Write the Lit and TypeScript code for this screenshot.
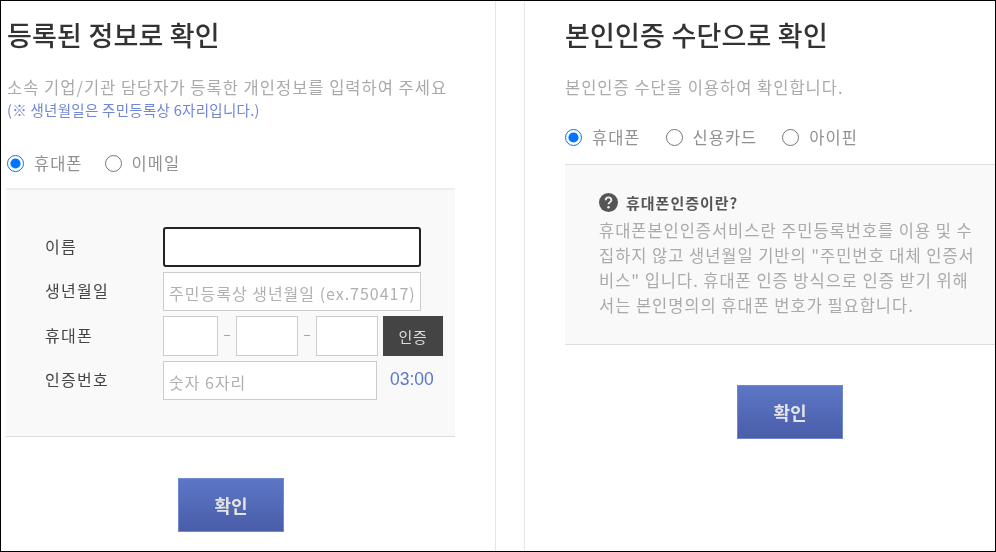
import { LitElement, html, css } from "lit";
import { customElement } from "lit/decorators.js";

@customElement("app-root")
export class AppRoot extends LitElement {
  static styles = css`
    :host {
      display: block;
      width: 996px;
      height: 552px;
      box-sizing: border-box;
      border: 1px solid #000;
      background: #fff;
      overflow: hidden;
      font-family: "Noto Sans CJK KR", "Liberation Sans", sans-serif;
      color: #888;
    }
    .page {
      display: grid;
      grid-template-columns: 495px 1fr;
      height: 100%;
      filter: blur(0.5px);
    }
    .left {
      border-right: 1px solid #e4e4e4;
      padding: 0 40px 0 5px;
      box-sizing: border-box;
    }
    .left > h2,
    .left > .desc,
    .left > .note,
    .left > .radios { margin-left: 1px; }
    .right {
      margin-left: 28px;
      border-left: 1px solid #e4e4e4;
      padding-left: 40px;
    }
    h2 {
      margin: 0;
      height: 68px;
      font-size: 27px;
      line-height: 68px;
      font-weight: 500;
      color: #333;
      letter-spacing: 0.2px;
    }
    .desc {
      margin: 5px 0 0;
      height: 25px;
      font-size: 16.5px;
      line-height: 26px;
      color: #aaa;
      letter-spacing: 1px;
      white-space: nowrap;
    }
    .note {
      margin: 0;
      height: 22px;
      font-size: 14.5px;
      line-height: 22px;
      color: #6f86d6;
      letter-spacing: 0.28px;
      white-space: nowrap;
    }
    .radios {
      display: flex;
      align-items: center;
      gap: 22px;
      height: 24px;
      font-size: 16.5px;
      color: #919191;
    }
    .left .radios { margin-top: 30px; }
    .right .radios { margin-top: 26px; gap: 25px; }
    label.radio {
      display: flex;
      align-items: center;
      gap: 10px;
      letter-spacing: 1px;
    }
    label.radio input {
      margin: 0;
      width: 17px;
      height: 17px;
      accent-color: #0075ff;
    }
    .form-box {
      margin-top: 13px;
      height: 249px;
      box-sizing: border-box;
      border-top: 2px solid #eee;
      border-bottom: 1px solid #ddd;
      background: #f9f9f9;
      padding: 37px 0 0 39px;
      display: flex;
      flex-direction: column;
      gap: 5px;
    }
    .row {
      display: grid;
      grid-template-columns: 118px 1fr;
      height: 40px;
    }
    .row.short { height: 39px; }
    .lbl {
      font-size: 16px;
      line-height: 38px;
      color: #444;
      letter-spacing: 1.3px;
    }
    .row.short .lbl { line-height: 36px; }
    .ctrl {
      display: flex;
      align-items: stretch;
      min-width: 0;
    }
    input.text {
      box-sizing: border-box;
      margin: 0;
      height: 100%;
      border: 1px solid #ccc;
      background: #fff;
      padding: 2px 5px 0;
      outline: none;
      font: inherit;
      font-size: 16px;
      letter-spacing: 1px;
    }
    input.text::placeholder { color: #b0b0b0; opacity: 1; }
    input.name {
      width: 258px;
      border: 2px solid #222;
      border-radius: 3px;
    }
    input.birth { width: 258px; }
    input.code { width: 214px; }
    input.p1 { width: 55px; }
    input.p2, input.p3 { width: 62px; }
    .dash {
      width: 18px;
      text-align: center;
      line-height: 34px;
      color: #999;
      font-size: 14px;
    }
    .verify {
      margin-left: 5px;
      width: 60px;
      box-sizing: border-box;
      border: none;
      background: #444;
      color: #ddd;
      font: inherit;
      font-size: 15px;
      letter-spacing: 0.6px;
    }
    .timer {
      margin-left: 13px;
      font-family: "Liberation Sans", sans-serif;
      font-size: 17.5px;
      line-height: 37px;
      color: #5a78cc;
    }
    .action {
      display: block;
      width: 106px;
      height: 54px;
      border: 1px solid #6f88d0;
      box-sizing: border-box;
      background: linear-gradient(#5c77c6, #4a5da9);
      color: #e4e4e4;
      font: inherit;
      font-size: 18px;
      font-weight: 700;
    }
    .left .action { margin: 41px 0 0 172px; }
    .right .action { margin: 40px 0 0 172px; }
    .info {
      margin-top: 15px;
      height: 181px;
      box-sizing: border-box;
      border-top: 1px solid #ddd;
      border-bottom: 1px solid #ddd;
      background: #f9f9f9;
      padding: 26px 20px 0 34px;
    }
    .info-head {
      display: flex;
      align-items: center;
      gap: 8px;
      height: 22px;
      font-size: 15px;
      font-weight: 700;
      color: #555;
      letter-spacing: 1px;
    }
    .info-head svg { display: block; }
    .info p {
      margin: 5px 0 0;
      width: 382px;
      font-size: 16.5px;
      line-height: 25px;
      color: #aaa;
      letter-spacing: 0.96px;
      word-break: break-all;
    }
  `;

  render() {
    return html`
      <div class="page">
        <section class="left">
          <h2>등록된 정보로 확인</h2>
          <p class="desc">소속 기업/기관 담당자가 등록한 개인정보를 입력하여 주세요</p>
          <p class="note">(※ 생년월일은 주민등록상 6자리입니다.)</p>
          <div class="radios">
            <label class="radio"><input type="radio" name="a" checked />휴대폰</label>
            <label class="radio"><input type="radio" name="a" />이메일</label>
          </div>
          <div class="form-box">
            <div class="row">
              <span class="lbl">이름</span>
              <div class="ctrl"><input class="text name" /></div>
            </div>
            <div class="row short">
              <span class="lbl">생년월일</span>
              <div class="ctrl"><input class="text birth" placeholder="주민등록상 생년월일 (ex.750417)" /></div>
            </div>
            <div class="row">
              <span class="lbl">휴대폰</span>
              <div class="ctrl">
                <input class="text p1" />
                <span class="dash">–</span>
                <input class="text p2" />
                <span class="dash">–</span>
                <input class="text p3" />
                <button class="verify">인증</button>
              </div>
            </div>
            <div class="row short">
              <span class="lbl">인증번호</span>
              <div class="ctrl">
                <input class="text code" placeholder="숫자 6자리" />
                <span class="timer">03:00</span>
              </div>
            </div>
          </div>
          <button class="action">확인</button>
        </section>
        <section class="right">
          <h2>본인인증 수단으로 확인</h2>
          <p class="desc">본인인증 수단을 이용하여 확인합니다.</p>
          <div class="radios">
            <label class="radio"><input type="radio" name="b" checked />휴대폰</label>
            <label class="radio"><input type="radio" name="b" />신용카드</label>
            <label class="radio"><input type="radio" name="b" />아이핀</label>
          </div>
          <div class="info">
            <div class="info-head">
              <svg width="19" height="19" viewBox="0 0 20 20">
                <circle cx="10" cy="10" r="10" fill="#555"></circle>
                <path d="M7 7.6a3 3 0 0 1 6 0c0 1.9-3 2.2-3 4.2" fill="none" stroke="#eee" stroke-width="2"></path>
                <circle cx="10" cy="15" r="1.3" fill="#eee"></circle>
              </svg>
              <span>휴대폰인증이란?</span>
            </div>
            <p>휴대폰본인인증서비스란 주민등록번호를 이용 및 수집하지 않고 생년월일 기반의 "주민번호 대체 인증서비스" 입니다. 휴대폰 인증 방식으로 인증 받기 위해서는 본인명의의 휴대폰 번호가 필요합니다.</p>
          </div>
          <button class="action">확인</button>
        </section>
      </div>
    `;
  }
}
